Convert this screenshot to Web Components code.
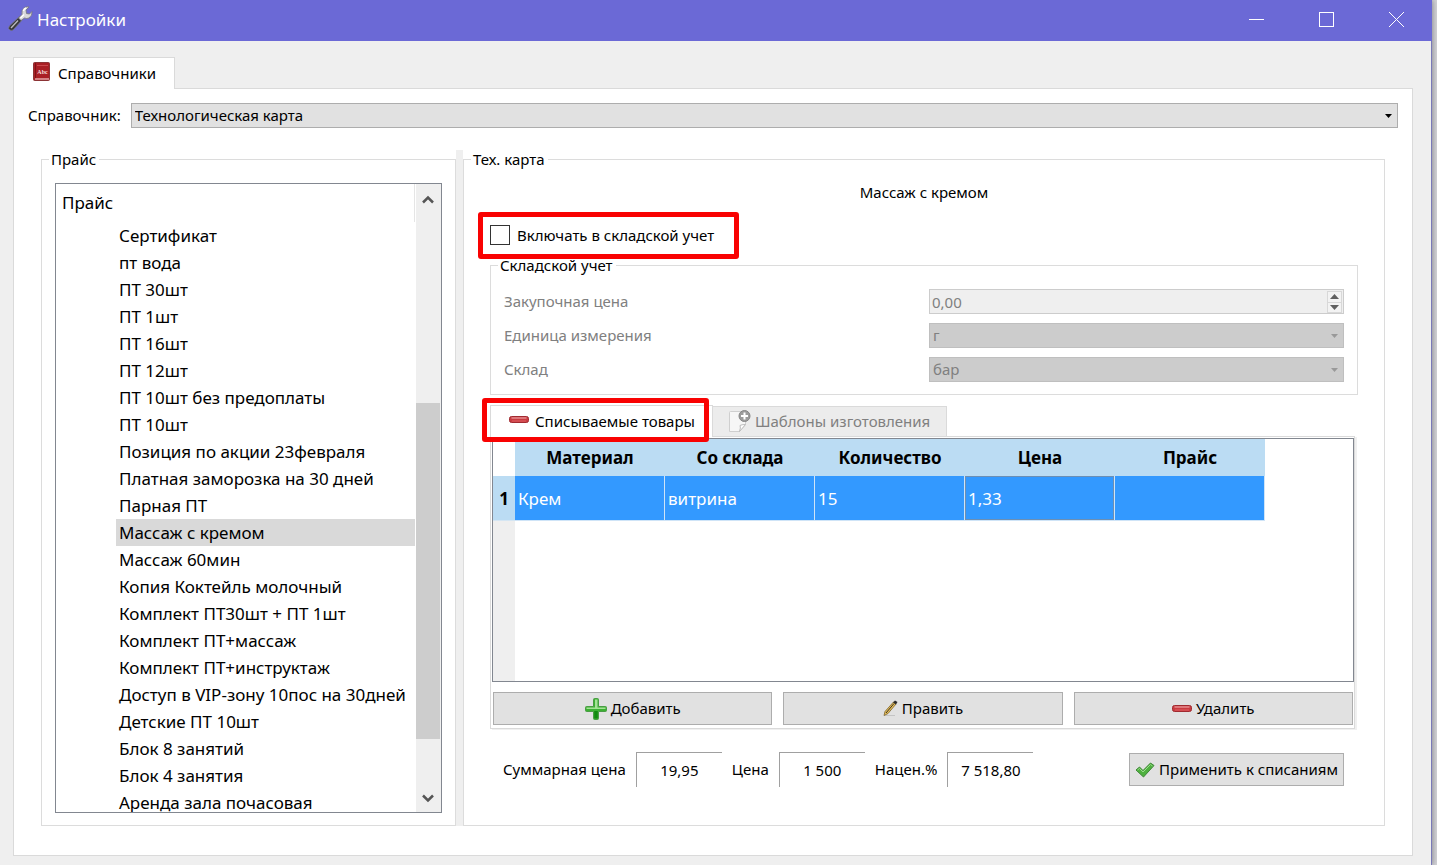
<!DOCTYPE html>
<html lang="ru">
<head>
<meta charset="utf-8">
<title>Настройки</title>
<style>
    body {
        margin: 0;
        background: #d2d2d6;
        color: #000;
        font: 15px/19px "Noto Sans", "Open Sans", sans-serif;
    }
</style>
</head>
<body>

<settings-window caption="Настройки">
    <tab-panel>
        <ui-tab slot="tabs" icon="book" label="Справочники" active></ui-tab>
        <directory-select label="Справочник:" value="Технологическая карта"></directory-select>
        <split-view>
            <group-box slot="left" caption="Прайс">
                <price-list></price-list>
            </group-box>
            <group-box slot="right" caption="Тех. карта">
                <tech-card></tech-card>
            </group-box>
        </split-view>
    </tab-panel>
</settings-window>

<script>
const ICONS = {
    wrench: `<svg width="26" height="26" viewBox="0 0 26 26">
        <path d="M1.500 20L12 10l3 3L5.500 23.500Q4 25 2 24T1 21z" fill="#35353c" stroke="#77777c" stroke-width=".8"/>
        <path d="M3 22l7-7.500" stroke="#bbb" stroke-width="1.400"/>
        <path d="M10.500 12L14 8.500Q13 4 16.500 1.500 19 .3 21 1L18 4l.5 3.500 3 .5L24 5.500q.5 4-3 6.500-2.500 1-4.500 0L13 14.500z" fill="#d9d9dc" stroke="#74747c" stroke-width=".8"/>
        <path d="M12.500 12l3.500-3.500M15.500 5q0-2 2.500-3" fill="none" stroke="#fff" stroke-width="1.400"/>
    </svg>`,
    book: `<svg width="17" height="19" viewBox="0 0 17 19">
        <rect x=".5" y=".5" width="16" height="18" rx="1" fill="#a91f25" stroke="#8b3335"/>
        <path d="M2.500 1v16" stroke="#7d1217"/>
        <path d="M4 3.500h11" stroke="#c9484c"/>
        <path d="M2 17h14" stroke="#f3c9c9" stroke-width="1.200"/>
        <text x="9.500" y="12" text-anchor="middle" font-family="Liberation Serif, serif" font-weight="bold" font-size="6" fill="#f4dede">Abc</text>
    </svg>`,
    minus: `<svg width="20" height="7" viewBox="0 0 20 7">
        <rect x=".5" y=".5" width="19" height="6" rx="2" fill="#c93b40" stroke="#a02a30"/>
        <path d="M2.500 2h15" stroke="#eda0a2" stroke-width="1.200"/>
        <path d="M3 5h14" stroke="#df5f62"/>
    </svg>`,
    plus: `<svg width="22" height="22" viewBox="0 0 22 22">
        <path d="M9.500 .5h3q1 0 1 1v7h7q1 0 1 1v3q0 1-1 1h-7v7q0 1-1 1h-3q-1 0-1-1v-7h-7q-1 0-1-1v-3q0-1 1-1h7v-7q0-1 1-1z" fill="#3cb033" stroke="#4a9c45"/>
        <path d="M10 1.500h2.500v8h8v1.500H1.500V9.500H10z" fill="#a4e296"/>
        <path d="M11 13v7.500" stroke="#128a10" stroke-width="3.500"/>
    </svg>`,
    pencil: `<svg width="15" height="17" viewBox="0 0 15 17">
        <path d="M1 15.500h11" stroke="#c4c4c4"/>
        <path d="M1 15.500l1-4L10.500 2l2.500 2L5 13.500z" fill="#e6bd55" stroke="#7b6330" stroke-width=".8"/>
        <path d="M3 13L11 3.500" stroke="#3a3326"/>
        <path d="M10 2.500L12 .5l2.500 1.500L13 4.500z" fill="#2d2d2d"/>
    </svg>`,
    check: `<svg width="20" height="16" viewBox="0 0 20 16">
        <path d="M1 8l3.500-3L8 8.500 15.500 1 19 3.500 8.500 15z" fill="#4fb13f" stroke="#3e8737"/>
        <path d="M2.500 8l2-1.500L8 10l7.500-7.500L17.500 4" fill="none" stroke="#9bdc8c"/>
    </svg>`,
    template: `<svg width="23" height="23" viewBox="0 0 23 23">
        <path d="M1.500 2.500q0-1 1-1h15v13L11.500 21.500h-10z" fill="#f6f6f6" stroke="#cfcfcf"/>
        <path d="M17.500 14.500q-4 0-5.500 1 1 2-.5 6z" fill="#fff" stroke="#bcbcbc"/>
        <circle cx="16.500" cy="6" r="5.500" fill="#9c9c9c" stroke="#858585"/>
        <path d="M16.500 2.500v7M13 6h7" stroke="#fff" stroke-width="2"/>
    </svg>`
};

const arrow = (color) => `<svg class="arrow" width="7" height="4" viewBox="0 0 7 4"><path d="M0 0h7L3.500 4z" fill="${color}"/></svg>`;

class BaseElement extends HTMLElement {
    constructor() {
        super();
        this.attachShadow({ mode: 'open' });
    }

    connectedCallback() {
        this.shadowRoot.innerHTML = `
        <style>
        *, :host { box-sizing: border-box; }
        button, input, select { font: inherit; color: inherit; margin: 0; border-radius: 0; }
        </style>` + this.render();
    }

    attr(name) {
        return this.getAttribute(name) || '';
    }
}

class UiIcon extends BaseElement {
    render() {
        return `
        <style>
        :host { display: inline-flex; flex: none; }
        svg { display: block; }
        </style>
        ${ICONS[this.attr('name')]}`;
    }
}

class SettingsWindow extends BaseElement {
    render() {
        return `
        <style>
        :host {
            display: flex;
            flex-direction: column;
            height: 100vh;
            margin-right: 5px;
            background: #efefef;
            border-right: 1px solid #7878b8;
            box-shadow: 0 0 6px #77777f;
        }
        header {
            display: flex;
            align-items: center;
            flex: none;
            height: 41px;
            padding: 0 1px 3px 8px;
            margin-right: -1px;
            background: #6b69d6;
            color: #fff;
        }
        h1 {
            flex: 1;
            margin: 0 0 0 3px;
            font-size: 17px;
            font-weight: normal;
        }
        button {
            display: grid;
            place-items: center;
            width: 70px;
            height: 37px;
            padding: 0;
            border: 0;
            background: none;
        }
        svg { fill: none; stroke: #fff; }
        main {
            display: flex;
            flex: 1;
            min-height: 0;
            padding: 16px 18px 9px 13px;
        }
        </style>
        <header>
            <ui-icon name="wrench"></ui-icon>
            <h1>${this.attr('caption')}</h1>
            <button aria-label="Свернуть"><svg width="15" height="15"><path d="M0 7.500h15"/></svg></button>
            <button aria-label="Развернуть"><svg width="15" height="15"><rect x=".5" y=".5" width="14" height="14"/></svg></button>
            <button aria-label="Закрыть"><svg width="15" height="15"><path d="M0 0l15 15M15 0L0 15"/></svg></button>
        </header>
        <main><slot></slot></main>`;
    }
}

class UiTab extends BaseElement {
    render() {
        return `
        <style>
        :host { display: flex; }
        button {
            display: flex;
            align-items: center;
            gap: 8px;
            height: 32px;
            padding: 0 18px 0 19px;
            border: 1px solid #dadada;
            border-bottom: 0;
            background: #fff;
            white-space: nowrap;
        }
        :host([active]) { margin-bottom: -1px; position: relative; }
        :host([inactive]) button {
            height: 30px;
            padding: 0 16px 0 15px;
            gap: 4px;
            background: #ececec;
            color: #808080;
            border-left: 0;
        }
        :host([icon="minus"]) button { gap: 6px; padding: 0 17px 0 18px; }
        :host([active]) ui-icon { margin-bottom: 4px; }
        </style>
        <button role="tab" aria-selected="${this.hasAttribute('active')}">
            <ui-icon name="${this.attr('icon')}"></ui-icon>${this.attr('label')}
        </button>`;
    }
}

class TabPanel extends BaseElement {
    render() {
        return `
        <style>
        :host { display: flex; flex-direction: column; flex: 1; min-width: 0; }
        nav { display: flex; flex: none; }
        section {
            display: flex;
            flex-direction: column;
            flex: 1;
            min-height: 0;
            padding: 14px 14px 29px;
            border: 1px solid #dadada;
            background: #fff;
        }
        </style>
        <nav role="tablist"><slot name="tabs"></slot></nav>
        <section><slot></slot></section>`;
    }
}

class DirectorySelect extends BaseElement {
    render() {
        return `
        <style>
        :host { display: flex; align-items: center; gap: 10px; flex: none; }
        .field { display: grid; flex: 1; align-items: center; }
        .field > * { grid-area: 1 / 1; }
        select {
            appearance: none;
            width: 100%;
            height: 25px;
            padding: 0 3px;
            border: 1px solid #adadad;
            background: #e1e1e1;
        }
        .arrow { justify-self: end; margin-right: 6px; pointer-events: none; }
        </style>
        <label for="dir">${this.attr('label')}</label>
        <div class="field">
            <select id="dir"><option>${this.attr('value')}</option></select>
            ${arrow('#000')}
        </div>`;
    }
}

class SplitView extends BaseElement {
    render() {
        return `
        <style>
        :host {
            display: grid;
            grid-template-columns: 415px 7px minmax(0, 1fr);
            grid-template-rows: minmax(0, 1fr);
            flex: 1;
            min-height: 0;
            margin: 22px 13px 0;
        }
        .splitter { background: #efefef; }
        </style>
        <slot name="left"></slot>
        <div class="splitter"></div>
        <slot name="right"></slot>`;
    }
}

class GroupBox extends BaseElement {
    render() {
        return `
        <style>
        :host { display: flex; min-width: 0; min-height: 0; }
        fieldset {
            display: flex;
            flex-direction: column;
            flex: 1;
            min-width: 0;
            min-height: 0;
            margin: 0;
            padding: 14px 13px 12px;
            border: 1px solid #dcdcdc;
        }
        legend { margin-left: -6px; padding: 0 3px 0 2px; }
        </style>
        <fieldset>
            <legend>${this.attr('caption')}</legend>
            <slot></slot>
        </fieldset>`;
    }
}

class PriceList extends BaseElement {
    render() {
        const items = [
            'Сертификат', 'пт вода', 'ПТ 30шт', 'ПТ 1шт', 'ПТ 16шт', 'ПТ 12шт',
            'ПТ 10шт без предоплаты', 'ПТ 10шт', 'Позиция по акции 23февраля',
            'Платная заморозка на 30 дней', 'Парная ПТ', 'Массаж с кремом',
            'Массаж 60мин', 'Копия Коктейль молочный', 'Комплект ПТ30шт + ПТ 1шт',
            'Комплект ПТ+массаж', 'Комплект ПТ+инструктаж',
            'Доступ в VIP-зону 10пос на 30дней', 'Детские ПТ 10шт',
            'Блок 8 занятий', 'Блок 4 занятия', 'Аренда зала почасовая'
        ];
        return `
        <style>
        :host {
            display: flex;
            flex: 1;
            min-height: 0;
            border: 1px solid #828790;
            font-size: 17px;
        }
        .tree { flex: 1; min-width: 0; margin-right: 1px; overflow: hidden; }
        .head {
            height: 38px;
            padding: 0 6px;
            line-height: 38px;
            border-right: 1px solid #e5e5e5;
        }
        ul { margin: 0; padding: 0 0 0 60px; list-style: none; }
        li { height: 27px; padding-left: 3px; line-height: 27px; white-space: nowrap; }
        li[aria-selected] { background: #d9d9d9; }
        .scroll {
            display: grid;
            grid-template-rows: 30px 189fr 336fr 45fr 28px;
            width: 25px;
            padding-right: 1px;
            background: #efefef;
        }
        .scroll svg { place-self: center; }
        .thumb { grid-row: 3; background: #cdcdcd; }
        .scroll .down { grid-row: 5; }
        </style>
        <div class="tree">
            <div class="head">Прайс</div>
            <ul role="listbox" aria-label="Прайс">
                ${items.map(t => `<li role="option"${t === 'Массаж с кремом' ? ' aria-selected="true"' : ''}>${t}</li>`).join('')}
            </ul>
        </div>
        <div class="scroll">
            <svg width="12" height="9" viewBox="0 0 12 9"><path d="M1 7.500l5-5 5 5" fill="none" stroke="#555" stroke-width="2.500"/></svg>
            <div class="thumb"></div>
            <svg class="down" width="12" height="9" viewBox="0 0 12 9"><path d="M1 1.500l5 5 5-5" fill="none" stroke="#555" stroke-width="2.500"/></svg>
        </div>`;
    }
}

// красная рамка поверх содержимого
class MarkFrame extends BaseElement {
    render() {
        return `
        <style>
        :host { display: flex; position: relative; width: fit-content; }
        .frame {
            position: absolute;
            inset: var(--frame-inset);
            z-index: 2;
            border: 5px solid #f90202;
            border-radius: 3px;
            pointer-events: none;
        }
        </style>
        <slot></slot>
        <div class="frame"></div>`;
    }
}

class CheckRow extends BaseElement {
    render() {
        return `
        <style>
        :host { display: flex; }
        label { display: flex; align-items: center; gap: 7px; }
        input {
            appearance: none;
            width: 20px;
            height: 20px;
            border: 1px solid #333;
            background: #fff;
        }
        </style>
        <label><input type="checkbox">${this.attr('label')}</label>`;
    }
}

class FormRow extends BaseElement {
    render() {
        const spin = this.attr('type') === 'spin';
        const control = spin
            ? `<input id="control" value="${this.attr('value')}" disabled>
               <div class="spin">
                   <button aria-label="Больше" disabled><svg width="9" height="5"><path d="M0 5h9L4.500 0z" fill="#606060"/></svg></button>
                   <button aria-label="Меньше" disabled><svg width="9" height="5"><path d="M0 0h9L4.500 5z" fill="#606060"/></svg></button>
               </div>`
            : `<select id="control" disabled><option>${this.attr('value')}</option></select>${arrow('#999')}`;
        return `
        <style>
        :host {
            display: grid;
            grid-template-columns: 1fr 1fr;
            column-gap: 10px;
            align-items: center;
            color: #808080;
        }
        .field { display: grid; align-items: center; }
        .field > * { grid-area: 1 / 1; }
        input, select {
            width: 100%;
            height: 25px;
            padding: 0 3px;
            border: 1px solid #bfbfbf;
            opacity: 1;
        }
        select { appearance: none; background: #ccc; }
        input { padding: 0 2px; background: #efefef; border-color: #ccc; }
        .arrow { justify-self: end; margin-right: 6px; }
        .spin { display: grid; justify-self: end; width: 15px; margin-right: 2px; border: 1px solid #d8d8d8; }
        .spin button {
            display: grid;
            place-items: center;
            height: 10px;
            padding: 0;
            border: 0;
            background: #f3f3f3;
        }
        .spin button + button { border-top: 1px solid #d8d8d8; }
        </style>
        <label for="control">${this.attr('label')}</label>
        <div class="field">${control}</div>`;
    }
}

class GoodsTable extends BaseElement {
    render() {
        return `
        <style>
        :host {
            display: grid;
            grid-template-rows: auto 1fr;
            flex: 1;
            min-height: 0;
            border: 1px solid #828790;
            font-size: 17px;
        }
        table { width: 772px; border-collapse: separate; border-spacing: 0; table-layout: fixed; }
        .num { width: 22px; }
        th, td { padding: 0 3px; }
        thead th { height: 37px; background: #bbdcf3; }
        thead td { background: #fff; }
        tbody th { height: 45px; background: #bbdcf3; border-bottom: 1px solid #d5e6f3; }
        tbody td {
            background: #3399ff;
            color: #fff;
            border-right: 1px solid #cfe4f7;
            border-bottom: 1px solid #cfe4f7;
        }
        tbody .current { box-shadow: inset 0 0 0 1px #6b8fb5; }
        .rail { width: 22px; background: #efefef; }
        </style>
        <table>
            <thead>
                <tr><td class="num"></td><th>Материал</th><th>Со склада</th><th>Количество</th><th>Цена</th><th>Прайс</th></tr>
            </thead>
            <tbody>
                <tr><th>1</th><td>Крем</td><td>витрина</td><td>15</td><td class="current">1,33</td><td></td></tr>
            </tbody>
        </table>
        <div class="rail"></div>`;
    }
}

class IconButton extends BaseElement {
    render() {
        return `
        <style>
        :host { display: flex; }
        button {
            display: flex;
            align-items: center;
            justify-content: center;
            flex: 1;
            gap: 4px;
            height: 33px;
            padding: 0 5px;
            border: 1px solid #adadad;
            background: #e1e1e1;
            white-space: nowrap;
        }
        </style>
        <button><ui-icon name="${this.attr('icon')}"></ui-icon><slot></slot></button>`;
    }
}

class SumField extends BaseElement {
    render() {
        return `
        <style>
        :host { display: flex; align-items: center; gap: 10px; }
        input {
            width: 86px;
            height: 35px;
            padding: 0;
            border: solid #a0a0a0;
            border-width: 1px 0 0 1px;
            background: #fff;
            text-align: center;
        }
        </style>
        <label for="sum">${this.attr('label')}</label>
        <input id="sum" value="${this.attr('value')}" readonly>`;
    }
}

class TechCard extends BaseElement {
    render() {
        return `
        <style>
        :host { display: flex; flex-direction: column; flex: 1; min-height: 0; padding: 0 13px 26px; }
        h2 { margin: 0 0 23px; font-size: 15px; font-weight: normal; text-align: center; }
        .check { --frame-inset: -13px -25px -14px -12px; }
        group-box { margin-top: 11px; }
        .rows { display: grid; gap: 9px; }
        .tabs { display: flex; align-items: flex-end; flex: none; margin-top: 10px; }
        .tabs mark-frame { --frame-inset: -7px 4px -6px -8px; }
        .pane {
            display: flex;
            flex-direction: column;
            flex: 1;
            min-height: 0;
            margin-right: 3px;
            padding: 1px 0 3px 1px;
            border: 1px solid #dadada;
            box-shadow: 2px 1px #f0f0f0;
        }
        .buttons { display: grid; grid-template-columns: 1fr 1fr 1fr; gap: 11px; margin: 10px 1px 0; }
        .totals { display: flex; align-items: center; gap: 10px; margin-top: 23px; padding: 0 14px 0 13px; }
        .totals icon-button { margin-left: auto; }
        </style>
        <h2>Массаж с кремом</h2>
        <mark-frame class="check"><check-row label="Включать в складской учет"></check-row></mark-frame>
        <group-box caption="Складской учет">
            <div class="rows">
                <form-row type="spin" label="Закупочная цена" value="0,00"></form-row>
                <form-row label="Единица измерения" value="г"></form-row>
                <form-row label="Склад" value="бар"></form-row>
            </div>
        </group-box>
        <div class="tabs" role="tablist">
            <mark-frame><ui-tab icon="minus" label="Списываемые товары" active></ui-tab></mark-frame>
            <ui-tab icon="template" label="Шаблоны изготовления" inactive></ui-tab>
        </div>
        <div class="pane">
            <goods-table></goods-table>
            <div class="buttons">
                <icon-button icon="plus">Добавить</icon-button>
                <icon-button icon="pencil">Править</icon-button>
                <icon-button icon="minus">Удалить</icon-button>
            </div>
        </div>
        <div class="totals">
            <sum-field label="Суммарная цена" value="19,95"></sum-field>
            <sum-field label="Цена" value="1 500"></sum-field>
            <sum-field label="Нацен.%" value="7 518,80"></sum-field>
            <icon-button icon="check">Применить к списаниям</icon-button>
        </div>`;
    }
}

customElements.define('ui-icon', UiIcon);
customElements.define('settings-window', SettingsWindow);
customElements.define('ui-tab', UiTab);
customElements.define('tab-panel', TabPanel);
customElements.define('directory-select', DirectorySelect);
customElements.define('split-view', SplitView);
customElements.define('group-box', GroupBox);
customElements.define('price-list', PriceList);
customElements.define('mark-frame', MarkFrame);
customElements.define('check-row', CheckRow);
customElements.define('form-row', FormRow);
customElements.define('goods-table', GoodsTable);
customElements.define('icon-button', IconButton);
customElements.define('sum-field', SumField);
customElements.define('tech-card', TechCard);
</script>
</body>
</html>
